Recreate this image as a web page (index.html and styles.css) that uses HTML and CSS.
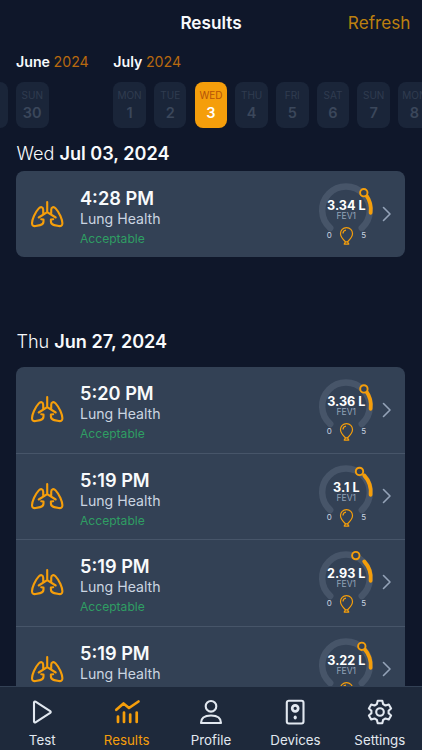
FILE: index.html
```html
<!DOCTYPE html>
<html lang="en">
<head>
    <meta charset="UTF-8">
    <meta name="viewport" content="width=device-width, initial-scale=1.0">
    <title>Results</title>
    <link rel="stylesheet" href="styles.css">
</head>
<body>
    <!-- Shared icons -->
    <svg class="sprite" width="0" height="0">
        <symbol id="lungs" viewBox="0 0 34 29">
            <path d="M17.200 2v10.200M17.200 12.200l-8.500 5.300M17.200 12.200l8.500 5.300M13.200 13.500V9.800c0-2.800-2.500-3.500-4.400-1.400C5 12.500 2 19.500 2 23.300c0 2.400 1.500 3.100 3.600 2.700l4.600-.9c2.300-.500 3.300-1.600 3.300-3.500v-2.100l-2.300-.300M21.200 13.500V9.800c0-2.800 2.500-3.500 4.400-1.400 3.800 4.100 6.800 11.100 6.800 14.900 0 2.400-1.500 3.100-3.600 2.700l-4.600-.9c-2.300-.500-3.300-1.600-3.300-3.500v-2.100l2.300-.300"/>
        </symbol>
        <symbol id="track" viewBox="0 0 60 66">
            <path class="gauge-track" d="M14.200 48A23.800 23.800 0 1 1 45.800 48"/>
            <g class="balloon">
                <path d="M30.500 47.600c3.600 0 6 2.700 6 6 0 3.800-3 6.300-5 8.300h-2c-2-2-5-4.500-5-8.300 0-3.300 2.400-6 6-6zM29.500 61.900l-1.300 2.200h4.600l-1.300-2.200M27 53.600c0-2 1.200-3.300 3-3.500"/>
            </g>
        </symbol>
        <symbol id="chevron" viewBox="0 0 10 16">
            <path d="M1.500 1.500L8 8l-6.500 6.500"/>
        </symbol>
    </svg>

    <div class="app">
        <header class="topbar">
            <span></span>
            <h1>Results</h1>
            <a class="refresh">Refresh</a>
        </header>

        <div class="calendar">
            <section class="month june">
                <h2>June <span>2024</span></h2>
                <div class="days">
                    <div class="day"></div>
                    <div class="day">SUN<b>30</b></div>
                </div>
            </section>
            <section class="month">
                <h2>July <span>2024</span></h2>
                <div class="days">
                    <div class="day">MON<b>1</b></div>
                    <div class="day">TUE<b>2</b></div>
                    <div class="day active">WED<b>3</b></div>
                    <div class="day">THU<b>4</b></div>
                    <div class="day">FRI<b>5</b></div>
                    <div class="day">SAT<b>6</b></div>
                    <div class="day">SUN<b>7</b></div>
                    <div class="day">MON<b>8</b></div>
                </div>
            </section>
        </div>

        <main class="results">
            <h3>Wed <b>Jul 03, 2024</b></h3>
            <div class="card first">
                <div class="row">
                    <svg class="lungs"><use href="#lungs"/></svg>
                    <div class="info">
                        <strong>4:28 PM</strong>
                        <span>Lung Health</span>
                        <em>Acceptable</em>
                    </div>
                    <svg class="gauge" viewBox="0 0 60 66">
                        <use href="#track"/>
                        <path class="gauge-zone" d="M50 14.800A24.800 24.800 0 0 1 54.600 32.800"/>
                        <circle class="gauge-dot" cx="47.800" cy="12.700" r="3.700"/>
                        <text class="value" x="30.300" y="30">3.34 L</text>
                        <text class="unit" x="30.300" y="38.500">FEV1</text>
                        <text class="limit" x="13.300" y="57.500">0</text>
                        <text class="limit" x="47.800" y="57.500">5</text>
                    </svg>
                    <svg class="chevron"><use href="#chevron"/></svg>
                </div>
            </div>

            <h3>Thu <b>Jun 27, 2024</b></h3>
            <div class="card">
                <div class="row">
                    <svg class="lungs"><use href="#lungs"/></svg>
                    <div class="info">
                        <strong>5:20 PM</strong>
                        <span>Lung Health</span>
                        <em>Acceptable</em>
                    </div>
                    <svg class="gauge" viewBox="0 0 60 66">
                        <use href="#track"/>
                        <path class="gauge-zone" d="M50 14.800A24.800 24.800 0 0 1 54.600 32.800"/>
                        <circle class="gauge-dot" cx="47.900" cy="12.900" r="3.700"/>
                        <text class="value" x="30.300" y="30">3.36 L</text>
                        <text class="unit" x="30.300" y="38.500">FEV1</text>
                        <text class="limit" x="13.300" y="57.500">0</text>
                        <text class="limit" x="47.800" y="57.500">5</text>
                    </svg>
                    <svg class="chevron"><use href="#chevron"/></svg>
                </div>
                <div class="row">
                    <svg class="lungs"><use href="#lungs"/></svg>
                    <div class="info">
                        <strong>5:19 PM</strong>
                        <span>Lung Health</span>
                        <em>Acceptable</em>
                    </div>
                    <svg class="gauge" viewBox="0 0 60 66">
                        <use href="#track"/>
                        <path class="gauge-zone" d="M48.200 13.400A24.800 24.800 0 0 1 54.600 32.800"/>
                        <circle class="gauge-dot" cx="43.500" cy="9.400" r="3.700"/>
                        <text class="value" x="30.300" y="30">3.1 L</text>
                        <text class="unit" x="30.300" y="38.500">FEV1</text>
                        <text class="limit" x="13.300" y="57.500">0</text>
                        <text class="limit" x="47.800" y="57.500">5</text>
                    </svg>
                    <svg class="chevron"><use href="#chevron"/></svg>
                </div>
                <div class="row">
                    <svg class="lungs"><use href="#lungs"/></svg>
                    <div class="info">
                        <strong>5:19 PM</strong>
                        <span>Lung Health</span>
                        <em>Acceptable</em>
                    </div>
                    <svg class="gauge" viewBox="0 0 60 66">
                        <use href="#track"/>
                        <path class="gauge-zone" d="M48.200 13.400A24.800 24.800 0 0 1 54.600 32.800"/>
                        <circle class="gauge-dot" cx="39.800" cy="7.600" r="3.700"/>
                        <text class="value" x="30.300" y="30">2.93 L</text>
                        <text class="unit" x="30.300" y="38.500">FEV1</text>
                        <text class="limit" x="13.300" y="57.500">0</text>
                        <text class="limit" x="47.800" y="57.500">5</text>
                    </svg>
                    <svg class="chevron"><use href="#chevron"/></svg>
                </div>
                <div class="row">
                    <svg class="lungs"><use href="#lungs"/></svg>
                    <div class="info">
                        <strong>5:19 PM</strong>
                        <span>Lung Health</span>
                    </div>
                    <svg class="gauge" viewBox="0 0 60 66">
                        <use href="#track"/>
                        <path class="gauge-zone" d="M48.500 14A24.800 24.800 0 0 1 54.600 32.800"/>
                        <circle class="gauge-dot" cx="45.800" cy="11.300" r="3.700"/>
                        <text class="value" x="30.300" y="30">3.22 L</text>
                        <text class="unit" x="30.300" y="38.500">FEV1</text>
                    </svg>
                    <svg class="chevron"><use href="#chevron"/></svg>
                </div>
            </div>
        </main>

        <nav class="tabs">
            <a class="tab">
                <svg viewBox="0 0 28 28"><path d="M6 4.500v19c0 .900.800 1.300 1.500.900l14.700-9.500c.700-.500.700-1.300 0-1.800L7.500 3.600C6.800 3.200 6 3.600 6 4.500z"/></svg>
                Test
            </a>
            <a class="tab active">
                <svg viewBox="0 0 28 28"><path class="thick" d="M3.300 11.800l7.200-6.300 5.500 4.500 9.500-6.500M5 18.500v5.500M11 14.500v9.500M17.200 16.500v7.500M23.700 14.500v9.500"/></svg>
                Results
            </a>
            <a class="tab">
                <svg viewBox="0 0 28 28"><circle cx="14" cy="8.300" r="5.300"/><path d="M4 25c0-5 3.700-7.500 10-7.500s10 2.500 10 7.500z"/></svg>
                Profile
            </a>
            <a class="tab">
                <svg viewBox="0 0 28 28"><rect x="5.800" y="2.700" width="16.700" height="22.800" rx="2"/><circle class="thick" cx="14.200" cy="10.300" r="3"/><ellipse class="fill" cx="14.200" cy="19.500" rx="1.600" ry="2"/></svg>
                Devices
            </a>
            <a class="tab">
                <svg viewBox="0 0 28 28"><circle cx="14" cy="14" r="3.800"/><path d="M11.700 2.800h4.600l.8 3.300 2.400 1.400 3.300-1 2.300 4-2.500 2.300v2.400l2.500 2.300-2.300 4-3.300-1-2.400 1.400-.8 3.300h-4.600l-.8-3.300-2.400-1.400-3.300 1-2.300-4 2.500-2.300v-2.400l-2.500-2.300 2.300-4 3.300 1 2.400-1.400z"/></svg>
                Settings
            </a>
        </nav>
    </div>
</body>
</html>
```
FILE: styles.css
```css
* {
    box-sizing: border-box;
}
body {
    margin: 0;
    background-color: #0f172a;
    font-family: Inter, "Liberation Sans", sans-serif;
    color: #f8fafc;
}
.sprite {
    display: block;
}
.app {
    height: 750px;
    display: flex;
    flex-direction: column;
    overflow: hidden;
}

/* Header */
.topbar {
    display: grid;
    grid-template-columns: 1fr auto 1fr;
    align-items: center;
    height: 46px;
    flex: none;
    padding: 0 11.500px 2px;
}
h1 {
    margin: 0;
    font-size: 17.200px;
    font-weight: 600;
}
.refresh {
    justify-self: end;
    font-size: 17.200px;
    color: #bd800f;
}

/* Calendar strip */
.calendar {
    display: flex;
    height: 93px;
    flex: none;
    padding: 7px 0 0 16px;
    overflow: hidden;
}
.month {
    flex: none;
}
.june {
    width: 97.3px;
}
.month h2 {
    margin: 0 0 10.500px;
    font-size: 14.200px;
    line-height: 18px;
    font-weight: 600;
}
.month h2 span {
    font-weight: 400;
    color: #b8690f;
}
.days {
    display: flex;
    gap: 8.200px;
}
.june .days {
    margin-left: -40.700px;
}
.day {
    width: 32.500px;
    height: 46px;
    flex: none;
    padding-top: 7px;
    border-radius: 8px;
    background-color: #1a2539;
    color: #303c50;
    font-size: 10px;
    line-height: 12px;
    text-align: center;
}
.day b {
    display: block;
    margin-top: 3px;
    font-size: 14.500px;
    line-height: 18px;
    font-weight: 600;
    color: #3b475b;
}
.day.active {
    background-color: #f59e0b;
    color: #b45309;
}
.day.active b {
    color: #ffffff;
}

/* Results list */
.results {
    flex: 1;
    min-height: 0;
    padding: 0 17px 0 16.400px;
    overflow: hidden;
}
h3 {
    margin: 0;
    height: 32px;
    line-height: 29px;
    font-size: 18.100px;
    font-weight: 300;
}
h3 b {
    font-weight: 600;
}
.card {
    border-radius: 8px;
    background-color: #334155;
}
.card.first {
    height: 86px;
    margin-bottom: 69.500px;
}
.card:not(.first) {
    margin-top: 8px;
}
.row {
    display: flex;
    height: 86.400px;
    padding-left: 13.600px;
}
.row + .row {
    border-top: 1px solid #475569;
}
.lungs {
    width: 34px;
    height: 29px;
    margin: 28.800px 16px 0 0;
    fill: none;
    stroke: #f59e0b;
    stroke-width: 2.100;
    stroke-linecap: round;
    stroke-linejoin: round;
}
.row + .row .lungs {
    margin-top: 28px;
}
.info {
    display: flex;
    flex-direction: column;
    flex: 1;
    padding-top: 15.900px;
}
.row + .row .info {
    padding-top: 15px;
}
.info strong {
    font-size: 18.200px;
    line-height: 22px;
    font-weight: 600;
}
.info span {
    font-size: 14.100px;
    line-height: 19px;
    color: #cbd5e1;
}
.info em {
    margin-top: 2px;
    font-size: 12.100px;
    line-height: 18px;
    font-style: normal;
    color: #2f9e63;
}
.gauge {
    width: 60px;
    height: 66px;
    margin-top: 9px;
    text-anchor: middle;
}
.row + .row .gauge {
    margin-top: 8px;
}
.gauge-track {
    fill: none;
    stroke: #475569;
    stroke-width: 6.500;
    stroke-linecap: round;
}
.gauge-zone {
    fill: none;
    stroke: #f59e0b;
    stroke-width: 3.800;
    stroke-linecap: round;
}
.gauge-dot {
    fill: #334155;
    stroke: #f59e0b;
    stroke-width: 1.900;
}
.balloon {
    fill: none;
    stroke: #f59e0b;
    stroke-width: 1.200;
    stroke-linejoin: round;
}
.value {
    font-size: 12.600px;
    font-weight: 700;
    fill: #ffffff;
}
.unit {
    font-size: 8.500px;
    fill: #94a3b8;
}
.limit {
    font-size: 8px;
    fill: #cbd5e1;
}
.chevron {
    width: 10px;
    height: 16px;
    margin: 35px 13px 0 6.500px;
    fill: none;
    stroke: #94a3b8;
    stroke-width: 1.600;
    stroke-linecap: round;
    stroke-linejoin: round;
}
.row + .row .chevron {
    margin-top: 34px;
}

/* Bottom tabs */
.tabs {
    display: flex;
    height: 64px;
    flex: none;
    border-top: 1px solid #334155;
    background-color: #1e293b;
}
.tab {
    display: flex;
    flex: 1;
    flex-direction: column;
    align-items: center;
    padding-top: 11px;
    font-size: 13.300px;
    line-height: 18px;
    color: #e2e8f0;
}
.tab svg {
    width: 28px;
    height: 28px;
    margin-bottom: 5px;
    fill: none;
    stroke: currentColor;
    stroke-width: 2.100;
    stroke-linecap: round;
    stroke-linejoin: round;
}
.tab .thick {
    stroke-width: 2.700;
}
.tab .fill {
    fill: currentColor;
    stroke: none;
}
.tab.active {
    color: #f59e0b;
}
```
